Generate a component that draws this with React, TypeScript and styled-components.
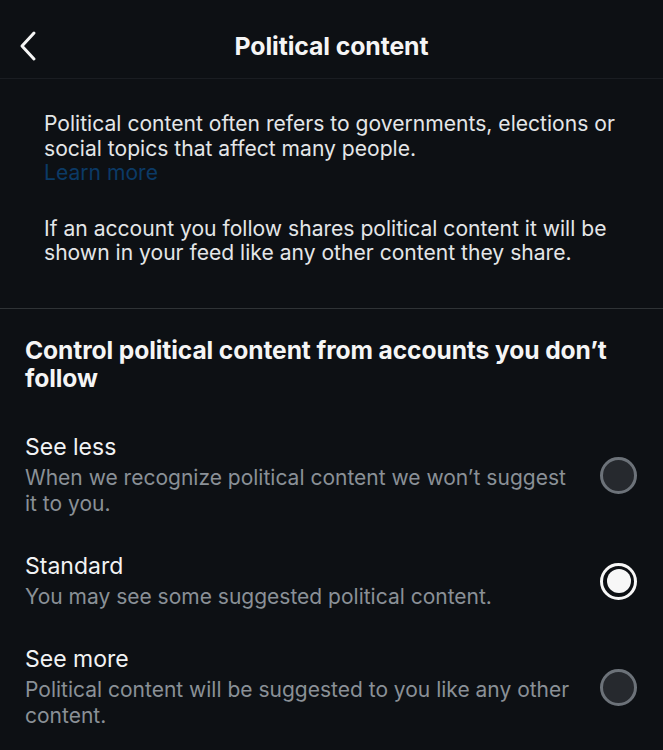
import styled, { createGlobalStyle } from "styled-components";

const GlobalStyle = createGlobalStyle`
  html, body {
    margin: 0;
    padding: 0;
    background: #0d1014;
  }
  body {
    font-family: Inter, "Noto Sans", sans-serif;
    color: #e7e9ea;
    -webkit-font-smoothing: antialiased;
  }
`;

const Page = styled.div`
  width: 663px;
  min-height: 750px;
  background: #0d1014;
  overflow: hidden;
`;

const Header = styled.header`
  height: 79px;
  box-sizing: border-box;
  padding-top: 13px;
  display: grid;
  grid-template-columns: 60px 1fr 60px;
  align-items: center;
  border-bottom: 1px solid #1a1d22;
`;

const BackButton = styled.button`
  background: none;
  border: none;
  padding: 0 0 0 18px;
  display: flex;
  align-items: center;
  color: #f5f5f5;
  cursor: pointer;
`;

const Title = styled.h1`
  margin: 0;
  text-align: center;
  font-size: 24.8px;
  font-weight: 700;
  letter-spacing: -0.1px;
  color: #f5f5f5;
`;

const Intro = styled.section`
  padding: 33px 40px 42px 44px;
  border-bottom: 1px solid #2f3336;
`;

const Paragraph = styled.p`
  margin: 0;
  font-size: 21.1px;
  line-height: 24.5px;
  color: #e4e6e8;

  & + & {
    margin-top: 31px;
  }
`;

const LearnMore = styled.a`
  display: block;
  color: #0b3a66;
  text-decoration: none;
`;

const Controls = styled.section`
  padding: 27px 25px 0 25px;
`;

const Heading = styled.h2`
  margin: 0 0 42px 0;
  font-size: 24.6px;
  line-height: 28px;
  font-weight: 700;
  letter-spacing: -0.1px;
  color: #f5f5f5;
`;

const OptionList = styled.div`
  display: flex;
  flex-direction: column;
  gap: 36px;
`;

const Option = styled.label`
  display: flex;
  align-items: center;
  gap: 20px;
  cursor: pointer;
`;

const OptionText = styled.div`
  flex: 1;
  display: flex;
  flex-direction: column;
  gap: 5px;
`;

const OptionTitle = styled.span`
  font-size: 23px;
  line-height: 26px;
  color: #f2f3f4;
`;

const OptionDesc = styled.span`
  font-size: 21px;
  line-height: 26px;
  color: #8a9097;
`;

const Radio = styled.span<{ $checked: boolean }>`
  flex: none;
  width: 37px;
  height: 37px;
  margin-right: 1px;
  box-sizing: border-box;
  border-radius: 50%;
  border: 3px solid ${(p) => (p.$checked ? "#f7f7f7" : "#6c7279")};
  background: ${(p) => (p.$checked ? "#0d1014" : "#26292e")};
  display: flex;
  align-items: center;
  justify-content: center;

  &::after {
    content: "";
    display: ${(p) => (p.$checked ? "block" : "none")};
    width: 24px;
    height: 24px;
    border-radius: 50%;
    background: #f7f7f7;
  }
`;

const options = [
  {
    title: "See less",
    desc: "When we recognize political content we won’t suggest it to you.",
    checked: false,
  },
  {
    title: "Standard",
    desc: "You may see some suggested political content.",
    checked: true,
  },
  {
    title: "See more",
    desc: "Political content will be suggested to you like any other content.",
    checked: false,
  },
];

export default function App() {
  return (
    <>
      <GlobalStyle />
      <Page>
        <Header>
          <BackButton aria-label="Back">
            <svg width="22" height="32" viewBox="0 0 22 32" fill="none">
              <path
                d="M16 3 L4 16 L16 29"
                stroke="currentColor"
                strokeWidth="3"
                strokeLinecap="round"
                strokeLinejoin="round"
              />
            </svg>
          </BackButton>
          <Title>Political content</Title>
          <span />
        </Header>
        <Intro>
          <Paragraph>
            Political content often refers to governments, elections or social
            topics that affect many people.
            <LearnMore href="#">Learn more</LearnMore>
          </Paragraph>
          <Paragraph>
            If an account you follow shares political content it will be shown
            in your feed like any other content they share.
          </Paragraph>
        </Intro>
        <Controls>
          <Heading>Control political content from accounts you don’t follow</Heading>
          <OptionList>
            {options.map((o) => (
              <Option key={o.title}>
                <OptionText>
                  <OptionTitle>{o.title}</OptionTitle>
                  <OptionDesc>{o.desc}</OptionDesc>
                </OptionText>
                <Radio $checked={o.checked} />
              </Option>
            ))}
          </OptionList>
        </Controls>
      </Page>
    </>
  );
}
